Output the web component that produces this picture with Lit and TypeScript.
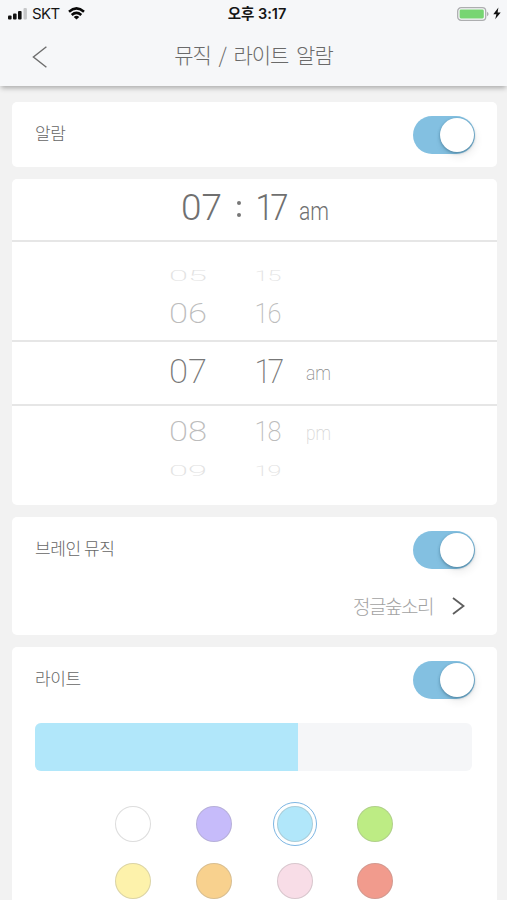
import { LitElement, html, css, svg } from "lit";
import { customElement, property } from "lit/decorators.js";
import { classMap } from "lit/directives/class-map.js";
import { styleMap } from "lit/directives/style-map.js";

/** A line of text stretched to a given width; the box spans baseline to cap height. */
@customElement("fit-text")
class FitText extends LitElement {
  @property() text = "";
  @property({ type: Number }) width = 20;
  @property({ type: Number }) cap = 20;
  @property({ type: Number }) squash = 1;
  @property({ type: Number }) track = 0;

  static styles = css`
    :host { display: block; }
    svg { display: block; overflow: visible; }
    text { fill: currentColor; white-space: pre; }
  `;

  render() {
    const h = this.cap * this.squash;
    const place = `translate(${this.track ? -1.5 : 0} ${h}) scale(${this.track ? 0.9 : 1} ${this.squash})`;
    const size = this.cap / 0.711;
    return html`<svg width=${this.width} height=${h}>
      ${this.track
        ? svg`<text transform=${place} font-size=${size} letter-spacing=${this.track}>${this.text}</text>`
        : svg`<text transform=${place} font-size=${size} textLength=${this.width}
            lengthAdjust="spacingAndGlyphs">${this.text}</text>`}
    </svg>`;
  }
}

@customElement("toggle-switch")
class ToggleSwitch extends LitElement {
  static styles = css`
    :host { display: block; flex: none; }
    .track {
      box-sizing: border-box; width: 62px; height: 38px; padding: 2px 1.5px;
      border-radius: 19px; background: #83c0e1; display: flex; justify-content: flex-end;
    }
    .knob {
      width: 34px; height: 34px; border-radius: 50%; background: #fff;
      box-shadow: 0 1px 3px rgba(30, 80, 110, 0.55), 2px 5px 8px rgba(0, 0, 0, 0.07);
    }
  `;
  render() {
    return html`<div class="track"><div class="knob"></div></div>`;
  }
}

const SWATCHES = [
  "#ffffff", "#c6bbfa", "#b1e7fa", "#bdec84",
  "#fdf2ab", "#f8d18e", "#f8dde7", "#f19b8d",
];

@customElement("app-root")
class AppRoot extends LitElement {
  static styles = css`
    :host {
      display: flex; flex-direction: column; height: 900px; overflow: hidden;
      background: #f2f2f2; color: #777;
      font-family: Roboto, "Noto Sans CJK KR", sans-serif;
    }
    svg { display: block; }
    header {
      flex: none; height: 86px; background: #f6f7f9; position: relative;
      box-shadow: 0 3px 5px -1px rgba(0, 0, 0, 0.3);
    }
    .status {
      height: 27px; display: grid; grid-template-columns: 1fr auto 1fr; align-items: center;
      color: #151515; font-family: Inter, "Noto Sans CJK KR", sans-serif;
    }
    .carrier { display: flex; align-items: center; padding-left: 8px; font-size: 15px; }
    .carrier .name { margin: 0 8px 0 5px; line-height: 27px; letter-spacing: -0.6px; }
    .clock { font-size: 14.5px; font-weight: 600; line-height: 25px; padding-left: 7px; }
    .power { display: flex; justify-content: flex-end; align-items: center; gap: 4px; padding-right: 6px; }
    .nav { height: 56px; display: grid; grid-template-columns: 60px 1fr 60px; align-items: center; }
    .back { padding-left: 32px; padding-top: 3px; }
    h1 {
      margin: 0; padding-bottom: 3px; text-align: center; font: 300 21px/30px "Noto Sans CJK KR", sans-serif;
      letter-spacing: -1px; word-spacing: 4px; color: #6a6a6a;
    }
    main { flex: none; padding: 16px 10px 0 12px; display: flex; flex-direction: column; }
    .card { background: #fff; border-radius: 5px; box-sizing: border-box; }
    .alarm { height: 65px; margin-bottom: 12px; }
    .time { height: 326px; margin-bottom: 12px; }
    .music { height: 118px; margin-bottom: 12px; }
    .light { height: 280px; }
    .row { height: 65px; padding: 0 22px 0 23px; display: flex; align-items: center; justify-content: space-between; }
    .label { padding-bottom: 3px; font: 300 17px/24px "Noto Sans CJK KR", sans-serif; letter-spacing: -0.4px; color: #666; }
    .choice { display: flex; align-items: center; justify-content: flex-end; gap: 19px; height: 48px; padding-right: 32px; }
    .choice span { padding-bottom: 1px; font: 300 19px/26px "Noto Sans CJK KR", sans-serif; letter-spacing: -1.5px; color: #a2a2a2; }
    .current {
      box-sizing: border-box; height: 62.5px; border-bottom: 2px solid #e6e6e6;
      display: flex; align-items: flex-end; padding: 0 0 20px 169px; font-weight: 300; color: #707070;
    }
    .colon { margin: 0 16px 3px 15px; display: flex; flex-direction: column; gap: 8px; }
    .colon i { width: 4px; height: 4px; border-radius: 50%; background: #777; }
    .current .ampm { margin-left: 12px; }
    .wheel { display: flex; flex-direction: column; }
    .slot { display: grid; grid-template-columns: 87px 50px 26px; padding-left: 156.5px; align-items: center; font-weight: 200; color: #bcbcbc; }
    .far { height: 18px; color: #e2e2e2; }
    .far.first { padding-top: 25px; }
    .near { height: 55.5px; padding-top: 1px; box-sizing: border-box; }
    .near.after { height: 49px; }
    .on { box-sizing: border-box; height: 66px; padding-bottom: 4px; border-top: 2px solid #e6e6e6; border-bottom: 2px solid #e6e6e6; color: #777; }
    .on .ampm { padding-top: 2px; color: #8c8c8c; }
    .after .ampm { padding-top: 2px; color: #d6d6d6; }
    .far.last { padding-top: 6px; }
    .slider { height: 48px; margin: 11px 25px 0 23px; border-radius: 6px; background: #f5f6f8; overflow: hidden; }
    .fill { height: 100%; background: #b1e7fa; }
    .swatches { display: grid; grid-template-columns: repeat(4, 80.8px); grid-auto-rows: 56.5px; padding: 25px 0 0 80.6px; }
    .cell { display: flex; align-items: center; justify-content: center; }
    .swatch { box-sizing: border-box; width: 36px; height: 36px; border-radius: 50%; border: 1px solid rgba(150, 150, 150, 0.32); }
    .ring { border: 1px solid #7db6e3; border-radius: 50%; padding: 3px; }
  `;

  render() {
    const slot = (cls: string, h: string, m: string, ap: string, cap: number, squash = 1) => html`
      <div class="slot ${cls}">
        <fit-text .text=${h} .width=${38} .cap=${cap} .squash=${squash}></fit-text>
        <fit-text .text=${m} .width=${27} .cap=${cap} .squash=${squash} .track=${cap > 22 ? -4 : -1}></fit-text>
        ${ap ? html`<fit-text class="ampm" .text=${ap} .width=${25} .cap=${15}></fit-text>` : ""}
      </div>`;
    return html`
      <header>
        <div class="status">
          <div class="carrier">
            <svg width="19" height="13" viewBox="0 0 19 13">
              <rect x="0" y="8.5" width="3.6" height="4" rx="1" fill="#111" />
              <rect x="5" y="6.5" width="3.6" height="6" rx="1" fill="#111" />
              <rect x="10" y="4" width="3.6" height="8.5" rx="1" fill="#111" />
              <rect x="15.5" y="1" width="3.4" height="11.5" rx="1" fill="#c6c7c9" />
            </svg>
            <span class="name">SKT</span>
            <svg width="17" height="13" viewBox="0 0 17 13" fill="none" stroke="#080808" stroke-width="2.6">
              <path d="M1 4.7Q8.5-1.8 16 4.7" />
              <path d="M3.7 8Q8.5 3.8 13.3 8" />
              <path d="M8.5 12.5L5.7 9.9Q8.5 7.7 11.3 9.9Z" fill="#080808" stroke="none" />
            </svg>
          </div>
          <div class="clock">오후 3:17</div>
          <div class="power">
            <svg width="32" height="14" viewBox="0 0 32 14">
              <rect x="0.7" y="0.7" width="28" height="12.6" rx="3.4" fill="#f6f7f9" stroke="#adaeb0" stroke-width="1.3" />
              <rect x="2.6" y="2.6" width="24.2" height="8.8" rx="1.4" fill="#77d572" />
              <path d="M30 4.8Q31.6 5.5 31.6 7T30 9.2Z" fill="#adaeb0" />
            </svg>
            <svg width="8" height="13" viewBox="0 0 8 13"><path d="M5.4 0.5L0.3 7.2H3.4L2.2 12.3L7.7 5.4H4.6Z" fill="#111" /></svg>
          </div>
        </div>
        <div class="nav">
          <div class="back">
            <svg width="16" height="22" viewBox="0 0 16 22" fill="none" stroke="#6d6d6d" stroke-width="1.4"><path d="M14.4 0.8L1.4 11L14.4 21.2" /></svg>
          </div>
          <h1>뮤직 / 라이트 알람</h1>
        </div>
      </header>
      <main>
        <section class="card alarm">
          <div class="row"><span class="label">알람</span><toggle-switch></toggle-switch></div>
        </section>
        <section class="card time">
          <div class="current">
            <fit-text .text=${"07"} .width=${41} .cap=${26}></fit-text>
            <div class="colon"><i></i><i></i></div>
            <fit-text .text=${"17"} .width=${30} .cap=${26} .track=${-4}></fit-text>
            <fit-text class="ampm" .text=${"am"} .width=${30} .cap=${18}></fit-text>
          </div>
          <div class="wheel">
            ${slot("far first", "05", "15", "", 20, 0.55)}
            ${slot("near", "06", "16", "", 20)}
            ${slot("on", "07", "17", "am", 24)}
            ${slot("near after", "08", "18", "pm", 20)}
            ${slot("far last", "09", "19", "", 20, 0.55)}
          </div>
        </section>
        <section class="card music">
          <div class="row"><span class="label">브레인 뮤직</span><toggle-switch></toggle-switch></div>
          <div class="choice">
            <span>정글숲소리</span>
            <svg width="13" height="18" viewBox="0 0 13 18" fill="none" stroke="#5e5e5e" stroke-width="1.8"><path d="M1 1L11.5 9L1 17" /></svg>
          </div>
        </section>
        <section class="card light">
          <div class="row"><span class="label">라이트</span><toggle-switch></toggle-switch></div>
          <div class="slider"><div class="fill" style=${styleMap({ width: "60.1%" })}></div></div>
          <div class="swatches">
            ${SWATCHES.map((c, i) => html`<div class="cell">
              <div class=${classMap({ ring: i === 2 })}><div class="swatch" style=${styleMap({ background: c })}></div></div>
            </div>`)}
          </div>
        </section>
      </main>`;
  }
}
